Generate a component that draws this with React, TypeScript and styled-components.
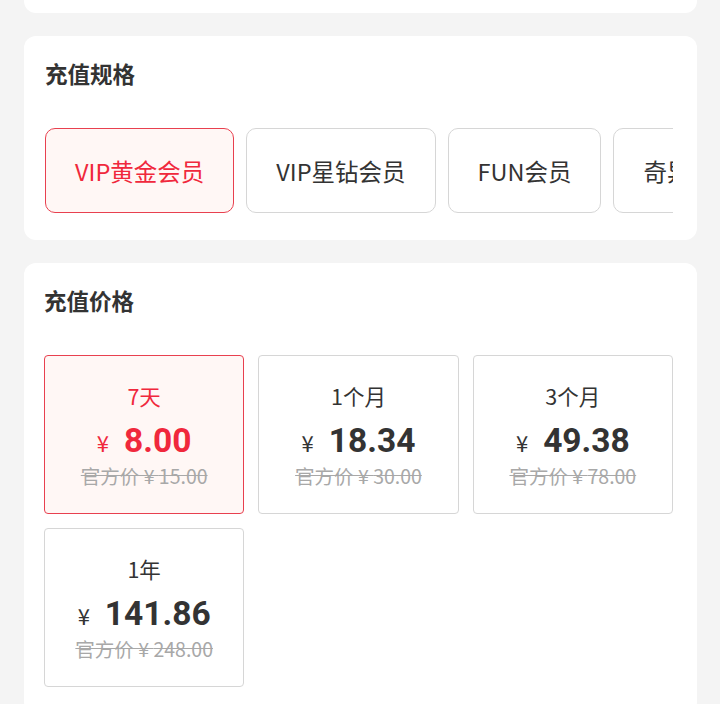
import React from "react";
import styled, { createGlobalStyle } from "styled-components";

const GlobalStyle = createGlobalStyle`
  html, body { margin: 0; padding: 0; background: #f4f4f4; }
  body { font-family: "Noto Sans CJK SC", "Noto Sans", sans-serif; color: #333; }
  * { box-sizing: border-box; }
`;

const Page = styled.div`
  display: flex;
  flex-direction: column;
  gap: 23px;
  padding: 0 23px 0 24px;
  height: 704px;
  overflow: hidden;
`;

const TopStub = styled.div`
  height: 13px;
  background: #fff;
  border-radius: 0 0 12px 12px;
  flex-shrink: 0;
`;

const Card = styled.section<{ $padLeft: number }>`
  background: #fff;
  border-radius: 12px;
  padding: 23px 24px 27px ${(p) => p.$padLeft}px;
  flex-shrink: 0;
`;

const Title = styled.h2`
  margin: 0 0 41px;
  font-size: 22.5px;
  line-height: 28px;
  font-weight: 700;
  color: #333;
`;

const ChipRow = styled.div`
  display: flex;
  gap: 12px;
  overflow: hidden;
`;

const Chip = styled.div<{ $active?: boolean }>`
  flex-shrink: 0;
  height: 85px;
  padding: 0 29px;
  display: flex;
  align-items: center;
  justify-content: center;
  border-radius: 10px;
  border: 1px solid ${(p) => (p.$active ? "#e8404f" : "#d6d6d6")};
  background: ${(p) => (p.$active ? "#fff7f5" : "#fff")};
  color: ${(p) => (p.$active ? "#f0283c" : "#333")};
  font-size: 23.5px;
  white-space: nowrap;
`;

const PriceGrid = styled.div`
  display: grid;
  grid-template-columns: repeat(3, 1fr);
  column-gap: 14px;
  row-gap: 14px;
`;

const PriceBox = styled.div<{ $active?: boolean }>`
  height: 159px;
  border-radius: 4px;
  border: 1px solid ${(p) => (p.$active ? "#e8404f" : "#d6d6d6")};
  background: ${(p) => (p.$active ? "#fff7f5" : "#fff")};
  color: ${(p) => (p.$active ? "#f0283c" : "#333")};
  display: flex;
  flex-direction: column;
  align-items: center;
  justify-content: center;
`;

const Period = styled.div`
  font-size: 21.5px;
  line-height: 30px;
  margin-bottom: 11px;
`;

const PriceLine = styled.div`
  display: flex;
  align-items: baseline;
  gap: 15px;
  line-height: 38px;
`;

const Yen = styled.span`
  font-size: 22px;
`;

const Amount = styled.span`
  font-family: Roboto, "Noto Sans", sans-serif;
  font-size: 33.5px;
  font-weight: 700;
`;

const Original = styled.div`
  margin-top: 2px;
  font-size: 19.5px;
  line-height: 26px;
  color: #a8a8a8;
  text-decoration: line-through;
`;

const specs = ["VIP黄金会员", "VIP星钻会员", "FUN会员", "奇异果会员"];
const prices = [
  { period: "7天", price: "8.00", original: "15.00" },
  { period: "1个月", price: "18.34", original: "30.00" },
  { period: "3个月", price: "49.38", original: "78.00" },
  { period: "1年", price: "141.86", original: "248.00" },
];

export default function App() {
  return (
    <>
      <GlobalStyle />
      <Page>
        <TopStub />
        <Card $padLeft={21}>
          <Title>充值规格</Title>
          <ChipRow>
            {specs.map((s, i) => (
              <Chip key={s} $active={i === 0}>
                {s}
              </Chip>
            ))}
          </ChipRow>
        </Card>
        <Card $padLeft={20}>
          <Title>充值价格</Title>
          <PriceGrid>
            {prices.map((p, i) => (
              <PriceBox key={p.period} $active={i === 0}>
                <Period>{p.period}</Period>
                <PriceLine>
                  <Yen>¥</Yen>
                  <Amount>{p.price}</Amount>
                </PriceLine>
                <Original>官方价 ¥ {p.original}</Original>
              </PriceBox>
            ))}
          </PriceGrid>
        </Card>
      </Page>
    </>
  );
}
